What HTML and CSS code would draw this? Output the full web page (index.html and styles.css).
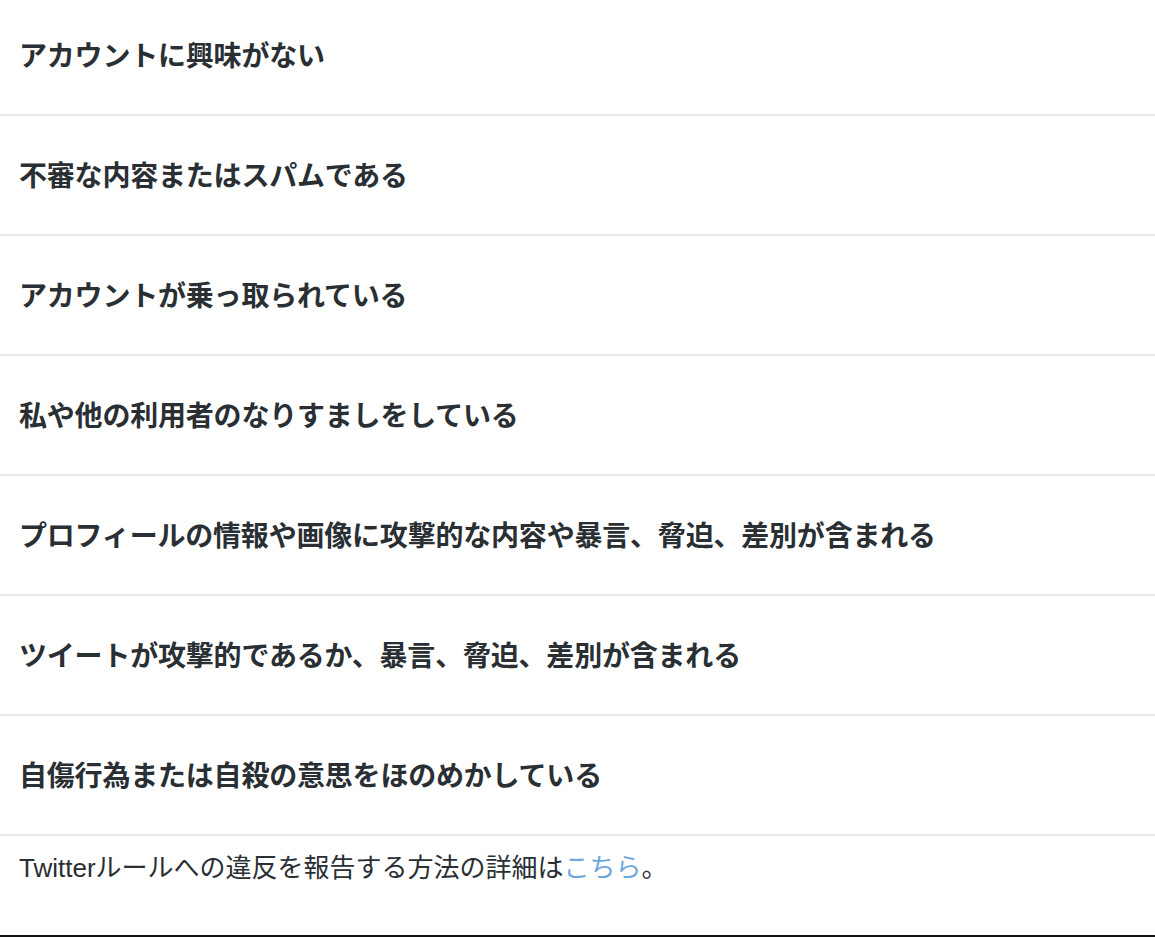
FILE: index.html
```html
<!DOCTYPE html>
<html lang="ja">
<head>
<meta charset="utf-8">
<title>報告</title>
<link rel="stylesheet" href="styles.css">
</head>
<body>
<div class="page">
  <ul class="options">
    <li class="option">アカウントに興味がない</li>
    <li class="option">不審な内容またはスパムである</li>
    <li class="option">アカウントが乗っ取られている</li>
    <li class="option">私や他の利用者のなりすましをしている</li>
    <li class="option">プロフィールの情報や画像に攻撃的な内容や暴言、脅迫、差別が含まれる</li>
    <li class="option">ツイートが攻撃的であるか、暴言、脅迫、差別が含まれる</li>
    <li class="option">自傷行為または自殺の意思をほのめかしている</li>
  </ul>
  <p class="footer">Twitterルールへの違反を報告する方法の詳細は<a class="link" href="#">こちら</a>。</p>
</div>
</body>
</html>
```

FILE: styles.css
```css
html, body {
  margin: 0;
  padding: 0;
  background: #ffffff;
}
body {
  font-family: "Liberation Sans", "Noto Sans CJK JP", sans-serif;
  color: #292f33;
  overflow: hidden;
}
.page {
  width: 1155px;
  height: 937px;
  display: flex;
  flex-direction: column;
}
.options {
  list-style: none;
  margin: -4px 0 0 0;
  padding: 0;
}
.option {
  height: 120px;
  box-sizing: border-box;
  display: flex;
  align-items: center;
  padding: 0 0 2px 19px;
  border-bottom: 2px solid #e6e8ea;
  font-family: "Noto Sans CJK JP", sans-serif;
  font-weight: 700;
  font-size: 28px;
  letter-spacing: -0.2px;
  color: #292f33;
}
.footer {
  margin: 0;
  height: 101px;
  box-sizing: border-box;
  padding: 15px 0 0 19px;
  font-size: 26px;
  line-height: 34px;
  color: #292f33;
  border-bottom: 2px solid #111111;
}
.link {
  color: #6ea7dc;
  text-decoration: none;
}
```
